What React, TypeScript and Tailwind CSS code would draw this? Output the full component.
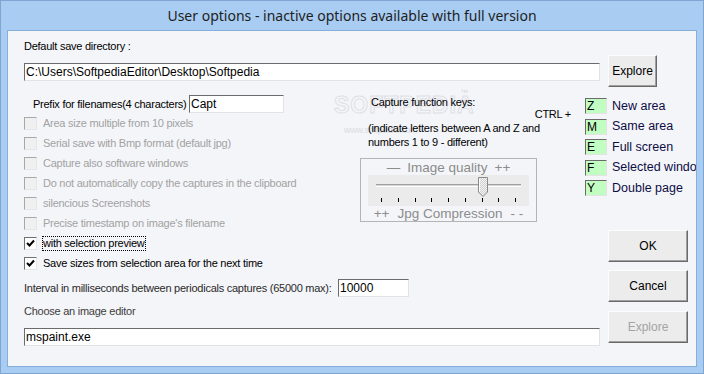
import type { ReactNode } from 'react'

const OPTIONS: { label: string; checked: boolean; disabled: boolean; focused?: boolean }[] = [
  { label: 'Area size multiple from 10 pixels', checked: false, disabled: true },
  { label: 'Serial save with Bmp format (default jpg)', checked: false, disabled: true },
  { label: 'Capture also software windows', checked: false, disabled: true },
  { label: 'Do not automatically copy the captures in the clipboard', checked: false, disabled: true },
  { label: 'silencious Screenshots', checked: false, disabled: true },
  { label: "Precise timestamp on image's filename", checked: false, disabled: true },
  { label: 'with selection preview', checked: true, disabled: false, focused: true },
  { label: 'Save sizes from selection area for the next time', checked: true, disabled: false },
]

const KEYS = [
  { key: 'Z', label: 'New area' },
  { key: 'M', label: 'Same area' },
  { key: 'E', label: 'Full screen' },
  { key: 'F', label: 'Selected window' },
  { key: 'Y', label: 'Double page' },
]

const TICKS = [0, 1, 2, 3, 4, 5, 6, 7, 8]

function TextBox({ value, className }: { value: string; className: string }) {
  return (
    <div
      className={`flex h-[18px] items-center overflow-hidden whitespace-nowrap border border-t-[#6b6b6b] border-l-[#6b6b6b] border-b-[#e3e3e3] border-r-[#e3e3e3] bg-white pl-[1px] text-[12px] tracking-normal text-black ${className}`}
    >
      {value}
    </div>
  )
}

function Button({ children, disabled, className }: { children: ReactNode; disabled?: boolean; className: string }) {
  return (
    <div
      className={`flex h-[32px] items-center justify-center border border-t-[#fcfcfc] border-l-[#fcfcfc] border-b-[#696969] border-r-[#696969] bg-[#ececec] text-[12px] tracking-normal shadow-[inset_-1px_-1px_0_#a0a0a0] ${
        disabled ? 'text-[#a3a3a3]' : 'text-black'
      } ${className}`}
    >
      {children}
    </div>
  )
}

function CheckBox({ checked, disabled }: { checked: boolean; disabled: boolean }) {
  return (
    <div
      className={`flex h-[13px] w-[13px] shrink-0 items-center justify-center border ${
        disabled
          ? 'border-t-[#a8a8a8] border-l-[#a8a8a8] border-b-[#e6e6e6] border-r-[#e6e6e6] bg-[#f0f0f0]'
          : 'border-t-[#707070] border-l-[#707070] border-b-[#e6e6e6] border-r-[#e6e6e6] bg-white'
      }`}
    >
      {checked ? (
        <svg width="9" height="9" viewBox="0 0 9 9">
          <path d="M1 4 L3.5 6.5 L8 1.5" fill="none" stroke="#000" strokeWidth="2" />
        </svg>
      ) : null}
    </div>
  )
}

function QualitySlider() {
  return (
    <div className="mt-[9px] flex h-[64px] w-[177px] flex-col items-center border border-[#b4b4b4] text-[13.5px] leading-[15px] tracking-normal text-[#8c8c8c]">
      <div className="mt-[1px] flex gap-[7px]">
        <span>—</span>
        <span>Image quality</span>
        <span>++</span>
      </div>
      <div className="relative h-[33px] w-[161px] bg-[#ebebeb]">
        <div className="mx-[8px] mt-[9px] h-[3px] border-t border-t-[#a0a0a0] border-b border-b-white bg-[#d8d8d8]" />
        <div className="mx-[13px] mt-[11px] flex justify-between">
          {TICKS.map((t) => (
            <div key={t} className="h-[4px] w-[1px] bg-black" />
          ))}
        </div>
        <svg className="absolute left-[110px] top-[2px]" width="10" height="20" viewBox="0 0 10 20">
          <defs>
            <pattern id="hatch" width="2" height="2" patternUnits="userSpaceOnUse">
              <rect width="2" height="2" fill="#f4f4f4" />
              <rect width="1" height="1" fill="#cfcfcf" />
              <rect x="1" y="1" width="1" height="1" fill="#cfcfcf" />
            </pattern>
          </defs>
          <path d="M0.5 0.5 H9.5 V15 L5 19.5 L0.5 15 Z" fill="url(#hatch)" stroke="#8a8a8a" />
          <path d="M1.5 1.5 V14.5" stroke="#fff" />
        </svg>
      </div>
      <div className="flex gap-[8px]">
        <span>++</span>
        <span>Jpg Compression</span>
        <span>- -</span>
      </div>
    </div>
  )
}

function App() {
  return (
    <div className="flex h-[374px] w-[704px] flex-col border border-[#7fa5d2] bg-[#a8ccf2] font-['Liberation_Sans',Arial,sans-serif]">
      <div className="flex h-[29px] items-center justify-center font-['Noto_Sans',sans-serif] text-[14px] text-[#1e1e1e]">
        User options - inactive options available with full version
      </div>

      <div className="relative mx-[6px] mb-[6px] flex flex-1 overflow-hidden border border-[#86aedb] bg-[#f4f5f9] text-[11px] tracking-[-0.25px] text-black">
        <div className="pointer-events-none absolute left-[326px] top-[62px] select-none font-bold text-[23px] leading-[24px] tracking-[1px] text-transparent [-webkit-text-stroke:1px_#dfe0e5]">
          SOFTPEDIA
        </div>
        <div className="pointer-events-none absolute left-[452px] top-[56px] select-none text-[8px] text-[#d6d7dc]">™</div>
        <div className="pointer-events-none absolute left-[336px] top-[93px] select-none text-[9px] text-[#d9dadf]">
          www.softpedia.com
        </div>

        <div className="relative flex w-[600px] shrink-0 flex-col pl-[16px] pt-[8px]">
          <div className="leading-[14px]">Default save directory :</div>
          <TextBox value="C:\Users\SoftpediaEditor\Desktop\Softpedia" className="mt-[10px] w-[576px]" />

          <div className="mt-[14px] flex">
            <div className="flex w-[336px] flex-col">
              <div className="flex h-[18px] items-center">
                <span className="w-[165px] whitespace-nowrap pl-[9px]">Prefix for filenames(4 characters)</span>
                <TextBox value="Capt" className="w-[95px]" />
              </div>
              {OPTIONS.map((opt) => (
                <div key={opt.label} className="flex h-[20px] items-center gap-[6px] whitespace-nowrap">
                  <CheckBox checked={opt.checked} disabled={opt.disabled} />
                  <span
                    className={`${opt.disabled ? 'text-[#a2a2a2]' : 'text-black'} ${
                      opt.focused ? 'outline outline-1 outline-dotted outline-black' : ''
                    } leading-[13px]`}
                  >
                    {opt.label}
                  </span>
                </div>
              ))}
            </div>

            <div className="flex w-[220px] flex-col">
              <div className="pl-[11px] leading-[14px]">Capture function keys:</div>
              <div className="mt-[-1px] pr-[9px] text-right leading-[13px]">CTRL +</div>
              <div className="pl-[8px] leading-[14px]">
                (indicate letters between A and Z and
                <br />
                numbers 1 to 9 - different)
              </div>
              <QualitySlider />
            </div>
          </div>

          <div className="mt-[6px] flex h-[18px] items-center">
            <span className="w-[314px] whitespace-nowrap text-[#2a2a2a]">
              Interval in milliseconds between periodicals captures (65000 max):
            </span>
            <TextBox value="10000" className="w-[71px]" />
          </div>
          <div className="mt-[7px] leading-[14px] text-[#3c3c3c]">Choose an image editor</div>
          <TextBox value="mspaint.exe" className="mt-[10px] w-[576px]" />
        </div>

        <div className="flex flex-col pt-[24px]">
          <Button className="w-[49px]">Explore</Button>
          <div className="-ml-[23px] mt-[11px] flex flex-col gap-[4.5px]">
            {KEYS.map((k) => (
              <div key={k.key} className="flex h-[16px] items-center gap-[5px] whitespace-nowrap tracking-normal">
                <div className="flex h-[16px] w-[22px] shrink-0 items-center border border-t-[#6b6b6b] border-l-[#6b6b6b] border-b-[#e3e3e3] border-r-[#e3e3e3] bg-[#c2fdc2] pl-[1px] text-[12px] text-black">
                  {k.key}
                </div>
                <span className="text-[12.5px] text-[#0d0d45]">{k.label}</span>
              </div>
            ))}
          </div>
          <Button className="mt-[34px] w-[80px]">OK</Button>
          <Button className="mt-[8px] w-[80px]">Cancel</Button>
          <Button disabled className="mt-[9px] w-[80px]">
            Explore
          </Button>
        </div>
      </div>
    </div>
  )
}

export default App
